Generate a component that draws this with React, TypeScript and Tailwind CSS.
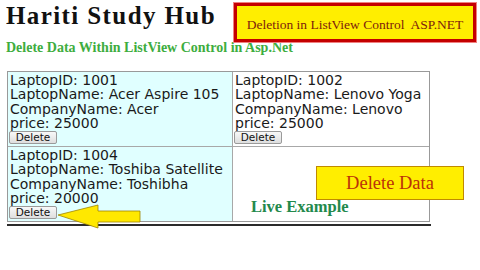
const laptops = [
  { id: 1001, name: 'Acer Aspire 105', company: 'Acer', price: 25000 },
  { id: 1002, name: 'Lenovo Yoga', company: 'Lenovo', price: 25000 },
  { id: 1004, name: 'Toshiba Satellite', company: 'Toshibha', price: 20000 },
];

function LaptopCell({ item, alt }: { item?: (typeof laptops)[number]; alt: boolean }) {
  return (
    <div className={`h-full pt-[1px] pl-[1px] ${alt ? 'bg-[#e0ffff]' : 'bg-white'}`}>
      {item && (
        <>
          <div className="pl-[1px] text-[14px] leading-[14.25px] text-[#1a1a1a]">
            <div>LaptopID: {item.id}</div>
            <div>LaptopName: {item.name}</div>
            <div>CompanyName: {item.company}</div>
            <div>price: {item.price}</div>
          </div>
          <button className="mt-[1px] w-[48px] h-[13px] flex items-center justify-center border border-[#9a9a9a] rounded-[2px] bg-gradient-to-b from-[#f8f8f8] to-[#dedede] text-[10.5px] leading-none text-[#111]">
            Delete
          </button>
        </>
      )}
    </div>
  );
}

export default function App() {
  return (
    <div
      className="relative w-[480px] h-[270px] overflow-hidden bg-white"
      style={{ fontFamily: '"DejaVu Sans", Verdana, sans-serif' }}
    >
      <h1 className="pl-[6px] pt-[3px] h-[28px] text-[25px] leading-[25px] font-bold tracking-[1.4px] text-[#111] font-['Liberation_Serif',serif]">
        Hariti Study Hub
      </h1>
      <p className="mt-[13px] pl-[6px] text-[14px] leading-[14px] font-bold text-[#3ead3e] font-['Liberation_Serif',serif]">
        Delete Data Within ListView Control in Asp.Net
      </p>

      <div className="mt-[16px] ml-[7px] w-[423px] border border-[#999] grid grid-cols-[225px_196px] grid-rows-[75px_74px]">
        <div className="border-r border-b border-[#a8a8a8]">
          <LaptopCell item={laptops[0]} alt />
        </div>
        <div className="border-b border-[#a8a8a8]">
          <LaptopCell item={laptops[1]} alt={false} />
        </div>
        <div className="border-r border-[#a8a8a8]">
          <LaptopCell item={laptops[2]} alt />
        </div>
        <div className="bg-white" />
      </div>
      <div className="mt-[2px] ml-[7px] w-[424px] h-[2px] bg-[#2b2b2b]" />

      {/* annotations drawn over the page */}
      <div className="absolute left-[234px] top-[3px] w-[242px] h-[39px] border-[3px] border-[#c40000] ring-1 ring-[#f08080] bg-[#ffee00] flex items-center justify-center pt-[5px]">
        <span className="text-[13.5px] leading-none text-[#7e1c0c] font-['Liberation_Serif',serif] whitespace-pre">
          Deletion in ListView Control  ASP.NET
        </span>
      </div>

      <div className="absolute left-[316px] top-[166px] w-[148px] h-[34px] border border-[#c08a00] bg-[#ffee00] flex items-center justify-center">
        <span className="text-[18.5px] leading-none text-[#bb3208] font-['Liberation_Serif',serif]">
          Delete Data
        </span>
      </div>

      <div className="absolute left-[251px] top-[199px] text-[16.5px] leading-none font-bold text-[#23894c] font-['Liberation_Serif',serif]">
        Live Example
      </div>

      <svg className="absolute left-0 top-0" width="480" height="270" viewBox="0 0 480 270">
        <polygon
          points="58,215 98,205 98,211 140,211 140,222 98,222 98,228"
          fill="#ffe800"
          stroke="#a08400"
          strokeWidth="0.8"
          strokeLinejoin="round"
        />
      </svg>
    </div>
  );
}
